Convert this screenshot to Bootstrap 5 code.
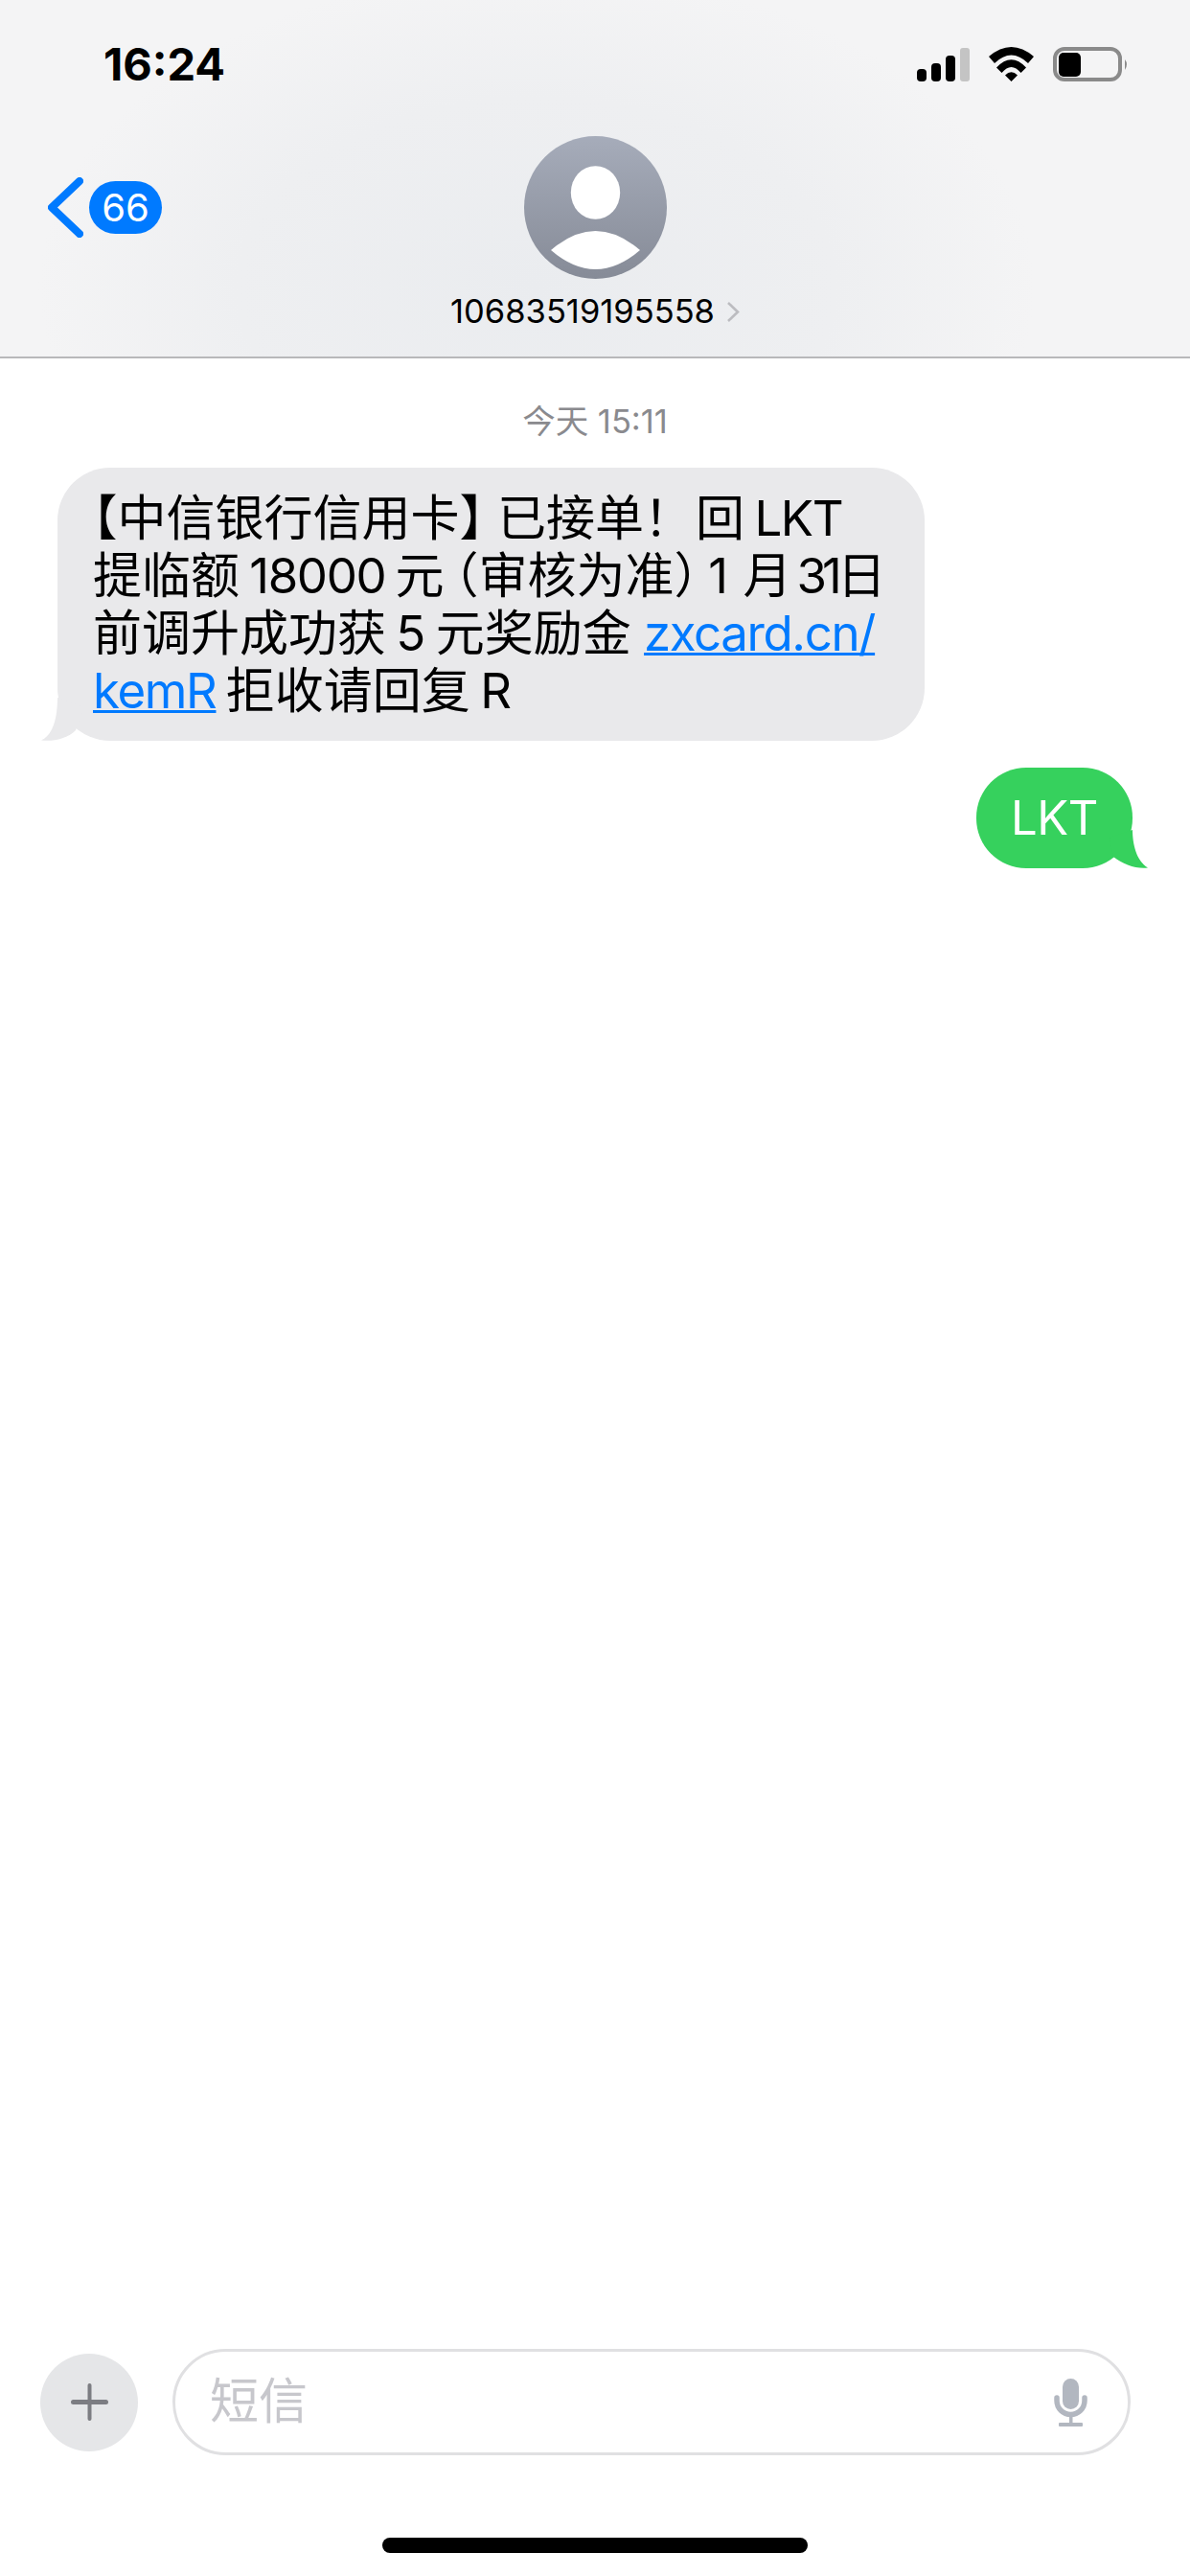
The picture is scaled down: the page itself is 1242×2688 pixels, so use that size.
<!DOCTYPE html>
<html lang="zh">
<head>
<meta charset="utf-8">
<title>短信</title>
<link rel="stylesheet" href="https://cdn.jsdelivr.net/npm/bootstrap@5.3.0/dist/css/bootstrap.min.css">
<style>
html,body{margin:0;height:2688px;background:#fff;}
body{font-family:Inter,"Noto Sans CJK SC",sans-serif;}
.screen{width:1242px;height:2688px;overflow:hidden;}
.top-head{height:374px;border-bottom:2px solid #b8b8ba;background:radial-gradient(ellipse 520px 330px at 560px 300px,#eaecef 0%,#eeeff1 60%,rgba(243,243,244,0) 100%),#f4f4f5;}
.status-row{padding:49px 64px 0 108px;height:85px;}
.clock{font-size:47px;line-height:36px;font-weight:700;color:#000;}
.nav-grid{display:grid;grid-template-columns:1fr 149px 1fr;margin-top:57px;}
.back-link{padding-left:50px;gap:6px;}
.count-pill{background:#007aff;color:#fff;width:76px;height:55px;border-radius:27.5px;font-size:40px;font-weight:400;line-height:55px;padding:0;}
.contact-row{margin-top:16px;gap:12px;height:36px;}
.contact-num{font-size:34.5px;line-height:36px;color:#000;}
.thread{padding-top:48px;}
.stamp{font-size:34.5px;line-height:36px;color:#8a8a8e;height:36px;}
.bubble-in{width:905px;height:285px;margin:30px 0 0 60px;padding:23px 30px 0 37px;background:#e9e9eb;border-radius:55px;font-size:51px;line-height:60px;color:#000;white-space:nowrap;word-spacing:-4px;}
.bubble-in a{color:#007aff;text-decoration-thickness:3px;}
.lat{letter-spacing:-1.4px;}
.half-punct{font-feature-settings:"halt";}
.brk-r{margin-right:14px;}
.bang{margin-right:3px;}
.month-cjk{margin-left:5px;}
.day-num{letter-spacing:-5px;margin-left:5px;}
.url-start{margin-left:3px;}
.bubble-out{width:163px;height:105px;margin:28px 60px 0 auto;background:#36d15d;border-radius:52px;color:#fff;font-size:49px;line-height:105px;letter-spacing:-.5px;}
.tail-in{left:-20px;bottom:0;}
.tail-out{right:-18px;bottom:0;}
.composer{padding:0 62px 0 42px;gap:36px;}
.plus-disc{width:102px;height:102px;background:#e5e6e8;flex:none;}
.entry-box{width:1000px;height:111px;border:3px solid #e0e0e2;border-radius:56px;padding:0 42px 0 36px;font-size:51px;color:#c7c7cc;}
.home-strip{width:444px;height:16px;background:#000;margin:86px auto 0;border-radius:8px;}
.foot-gap{height:24px;}
</style>
</head>
<body>
<div class="screen d-flex flex-column">
  <header class="top-head flex-shrink-0">
    <div class="status-row d-flex justify-content-between align-items-start">
      <span class="clock">16:24</span>
      <div class="d-flex" style="gap:20px">
        <svg width="55" height="36" viewBox="0 0 55 36"><rect x="0" y="23" width="10" height="13" rx="4" fill="#000"/><rect x="15" y="17" width="10" height="19" rx="4" fill="#000"/><rect x="30" y="9" width="10" height="27" rx="4" fill="#000"/><rect x="45" y="1" width="10" height="35" rx="3" fill="#c4c4c4"/></svg>
        <svg width="47" height="36" viewBox="0 0 47 36"><path d="M0 10Q23.5-10 47 10L41 17Q23.5 0 6 17Z M8 21.5Q23.5 5 39 21.5L33.5 27Q23.5 15 13.5 27Z M17 29.5Q23.5 23 30 29.5L23.5 36Z" fill="#000"/></svg>
        <svg width="79" height="36" viewBox="0 0 79 36"><rect x="2" y="2" width="68" height="32" rx="10" fill="none" stroke="#8a8a8a" stroke-width="4"/><rect x="6" y="6" width="23" height="25" rx="5" fill="#000"/><path d="M75 13Q79 18 75 24Z" fill="#8a8a8a"/></svg>
      </div>
    </div>
    <div class="nav-grid">
      <div class="back-link d-flex align-items-center">
        <svg width="37" height="63" viewBox="0 0 37 63"><path d="M33 4 4 31.5 33 59" fill="none" stroke="#007aff" stroke-width="8" stroke-linecap="round" stroke-linejoin="round"/></svg>
        <span class="badge rounded-pill count-pill">66</span>
      </div>
      <svg width="149" height="149" viewBox="0 0 149 149">
        <defs><linearGradient id="av" x1="0" y1="0" x2="0" y2="1"><stop offset="0" stop-color="#a6acba"/><stop offset="1" stop-color="#868b97"/></linearGradient></defs>
        <circle cx="74.5" cy="74.5" r="74.5" fill="url(#av)"/>
        <ellipse cx="74.5" cy="59" rx="25.7" ry="27.8" fill="#fff"/>
        <path d="M28 119Q74.5 79 121 119Q74.5 159 28 119Z" fill="#fff"/>
      </svg>
      <div></div>
    </div>
    <div class="contact-row d-flex justify-content-center align-items-center">
      <span class="contact-num">10683519195558</span>
      <svg width="14" height="23" viewBox="0 0 14 23"><path d="M2 2 12 11.500 2 21" fill="none" stroke="#bcbcc0" stroke-width="2.6"/></svg>
    </div>
  </header>
  <main class="thread flex-grow-1">
    <div class="stamp text-center">今天 15:11</div>
    <div class="bubble-in position-relative">
      <span class="half-punct">【</span>中信银行信用卡<span class="half-punct brk-r">】</span>已接单<span class="bang">！</span>回 <span class="lat">LKT</span><br>提临额 <span class="lat">18000</span> 元 <span class="half-punct">（</span>审核为准<span class="half-punct">）</span> 1 <span class="month-cjk">月</span><span class="day-num">31</span>日<br>前调升成功获 5 元奖励金 <a href="#" class="lat url-start">zxcard.cn/</a><br><a href="#" class="lat">kemR</a> 拒收请回复 R
      <svg class="tail-in position-absolute" width="50" height="45" viewBox="0 0 50 45"><path d="M20 0C20 22 15 39 3 44.5C15 46 30 43 39 34L48 10Z" fill="#e9e9eb"/></svg>
    </div>
    <div class="bubble-out position-relative text-center">LKT
      <svg class="tail-out position-absolute" width="50" height="40" viewBox="0 0 50 40"><path d="M32 0C32 15 36 32 48 39.5C36 41 22 36 12 28L8 8Z" fill="#36d15d"/></svg>
    </div>
  </main>
  <footer class="flex-shrink-0">
    <div class="composer d-flex align-items-center">
      <div class="plus-disc rounded-circle d-flex align-items-center justify-content-center">
        <svg width="39" height="39" viewBox="0 0 39 39"><rect x="0" y="17" width="39" height="5" rx="2.5" fill="#7c7d82"/><rect x="17.5" y="0" width="4" height="39" rx="2" fill="#7c7d82"/></svg>
      </div>
      <div class="entry-box d-flex align-items-center justify-content-between">
        <span>短信</span>
        <svg width="35" height="50" viewBox="0 0 35 50"><rect x="9" y="0" width="17" height="32" rx="8.5" fill="#b2b7c0"/><path d="M3 20V23A14.500 14.500 0 0 0 32 23V20" fill="none" stroke="#b2b7c0" stroke-width="5.500" stroke-linecap="round"/><rect x="16" y="37" width="3.500" height="10" fill="#b2b7c0"/><rect x="5" y="46" width="25" height="4" rx="1" fill="#b2b7c0"/></svg>
      </div>
    </div>
    <div class="home-strip"></div>
    <div class="foot-gap"></div>
  </footer>
</div>
<script src="https://cdn.jsdelivr.net/npm/bootstrap@5.3.0/dist/js/bootstrap.bundle.min.js"></script>
</body>
</html>
